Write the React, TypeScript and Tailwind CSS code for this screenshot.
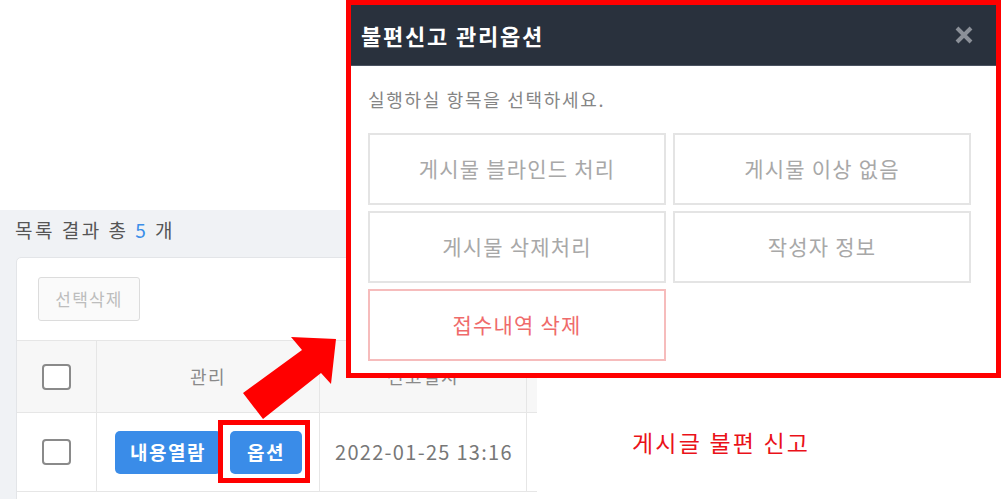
import React from "react";

const FONT = { fontFamily: '"Noto Sans CJK KR", "Noto Sans", sans-serif' };

function Checkbox() {
  return <div className="w-[29px] h-[26px] rounded-[4px] border-2 border-[#8a8a8a] bg-white" />;
}

function OptBtn({ children, danger }: { children: React.ReactNode; danger?: boolean }) {
  return (
    <div
      className={
        "h-[72px] flex items-center justify-center border-2 text-[21px] tracking-[1.2px] " +
        (danger ? "border-[#f6bcbc] text-[#ef6b6b]" : "border-[#e4e4e4] text-[#a8a8a8]")
      }
    >
      {children}
    </div>
  );
}

export default function App() {
  return (
    <div className="relative w-[1001px] h-[499px] overflow-hidden bg-white" style={FONT}>
      {/* background page */}
      <div className="pt-[210px]">
        <div className="w-[537px] h-[289px] bg-[#f0f2f5] overflow-hidden pl-[16px] pt-[7px]">
          <div className="h-[26px] leading-[26px] text-[19px] tracking-[2.5px] text-[#555] mb-[14px] -ml-[1px]">
            목록 결과 총 <span className="text-[#3b8ee8]">5</span> 개
          </div>
          <div className="w-[620px] bg-white border border-[#e3e5e8] rounded-tl-[5px]">
            <div className="h-[82px] pl-[21px] pt-[19px]">
              <div className="w-[102px] h-[44px] border border-[#dcdcdc] bg-[#fafafa] rounded-[3px] flex items-center justify-center text-[17px] tracking-[1.2px] text-[#bdbdbd]">
                선택삭제
              </div>
            </div>
            <div className="flex h-[72px] border-t border-[#e6e6e6] bg-[#f7f7f7] text-[18px] tracking-[1.5px] text-[#8a8a8a]">
              <div className="w-[80px] border-r border-[#e6e6e6] flex items-center justify-center">
                <Checkbox />
              </div>
              <div className="w-[223px] border-r border-[#e6e6e6] flex items-center justify-center">관리</div>
              <div className="w-[207px] border-r border-[#e6e6e6] flex items-center justify-center">신고일시</div>
              <div className="flex-1" />
            </div>
            <div className="flex h-[79px] border-t border-[#e6e6e6]">
              <div className="w-[80px] border-r border-[#e6e6e6] flex items-center justify-center">
                <Checkbox />
              </div>
              <div className="w-[223px] border-r border-[#e6e6e6] flex items-center pl-[18px] gap-[9px]">
                <div className="w-[106px] h-[43px] rounded-[5px] bg-[#3a8ce8] text-white font-bold text-[19px] tracking-[1.5px] flex items-center justify-center">
                  내용열람
                </div>
                <div className="w-[72px] h-[43px] rounded-[5px] bg-[#3a8ce8] text-white font-bold text-[19px] tracking-[1.5px] flex items-center justify-center">
                  옵션
                </div>
              </div>
              <div className="w-[207px] border-r border-[#e6e6e6] flex items-center pl-[15px] text-[20px] text-[#777] tracking-[1.3px]">
                2022-01-25 13:16
              </div>
              <div className="flex-1" />
            </div>
            <div className="h-[20px] border-t border-[#e6e6e6]" />
          </div>
        </div>
      </div>

      {/* red highlight around option button */}
      <div className="absolute left-[218px] top-[420px] w-[92px] h-[63px] border-[5px] border-[#ff0000]" />

      {/* arrow */}
      <svg className="absolute left-0 top-0" width="1001" height="499" viewBox="0 0 1001 499">
        <polygon
          points="336,339 291,337 302,350 243,393 263,419 321,373 331,384"
          fill="#ff0000"
        />
      </svg>

      {/* modal */}
      <div className="absolute left-[346px] top-0 w-[655px] h-[378px] border-[5px] border-[#ff0000] bg-white flex flex-col">
        <div className="h-[61px] bg-[#29313d] border-b border-[#4b5361] flex items-center justify-between pl-[10px] pr-[22px]">
          <span className="text-white font-bold text-[22px] tracking-[1.8px]">불편신고 관리옵션</span>
          <svg width="20" height="18" viewBox="0 0 20 18">
            <path d="M3 2 L17 16 M17 2 L3 16" stroke="#8b9098" strokeWidth="4" strokeLinecap="butt" />
          </svg>
        </div>
        <div className="pl-[17px] pt-[22px]">
          <div className="h-[22px] leading-[22px] text-[18px] tracking-[1.7px] text-[#858585] mb-[23px]">
            실행하실 항목을 선택하세요.
          </div>
          <div className="grid grid-cols-[298px_298px] gap-x-[7px] gap-y-[6px]">
            <OptBtn>게시물 블라인드 처리</OptBtn>
            <OptBtn>게시물 이상 없음</OptBtn>
            <OptBtn>게시물 삭제처리</OptBtn>
            <OptBtn>작성자 정보</OptBtn>
            <OptBtn danger>접수내역 삭제</OptBtn>
          </div>
        </div>
      </div>

      {/* annotation */}
      <div className="absolute left-[632px] top-[428px] text-[23px] leading-[28px] tracking-[2.2px] text-[#ea1119]">
        게시글 불편 신고
      </div>
    </div>
  );
}
